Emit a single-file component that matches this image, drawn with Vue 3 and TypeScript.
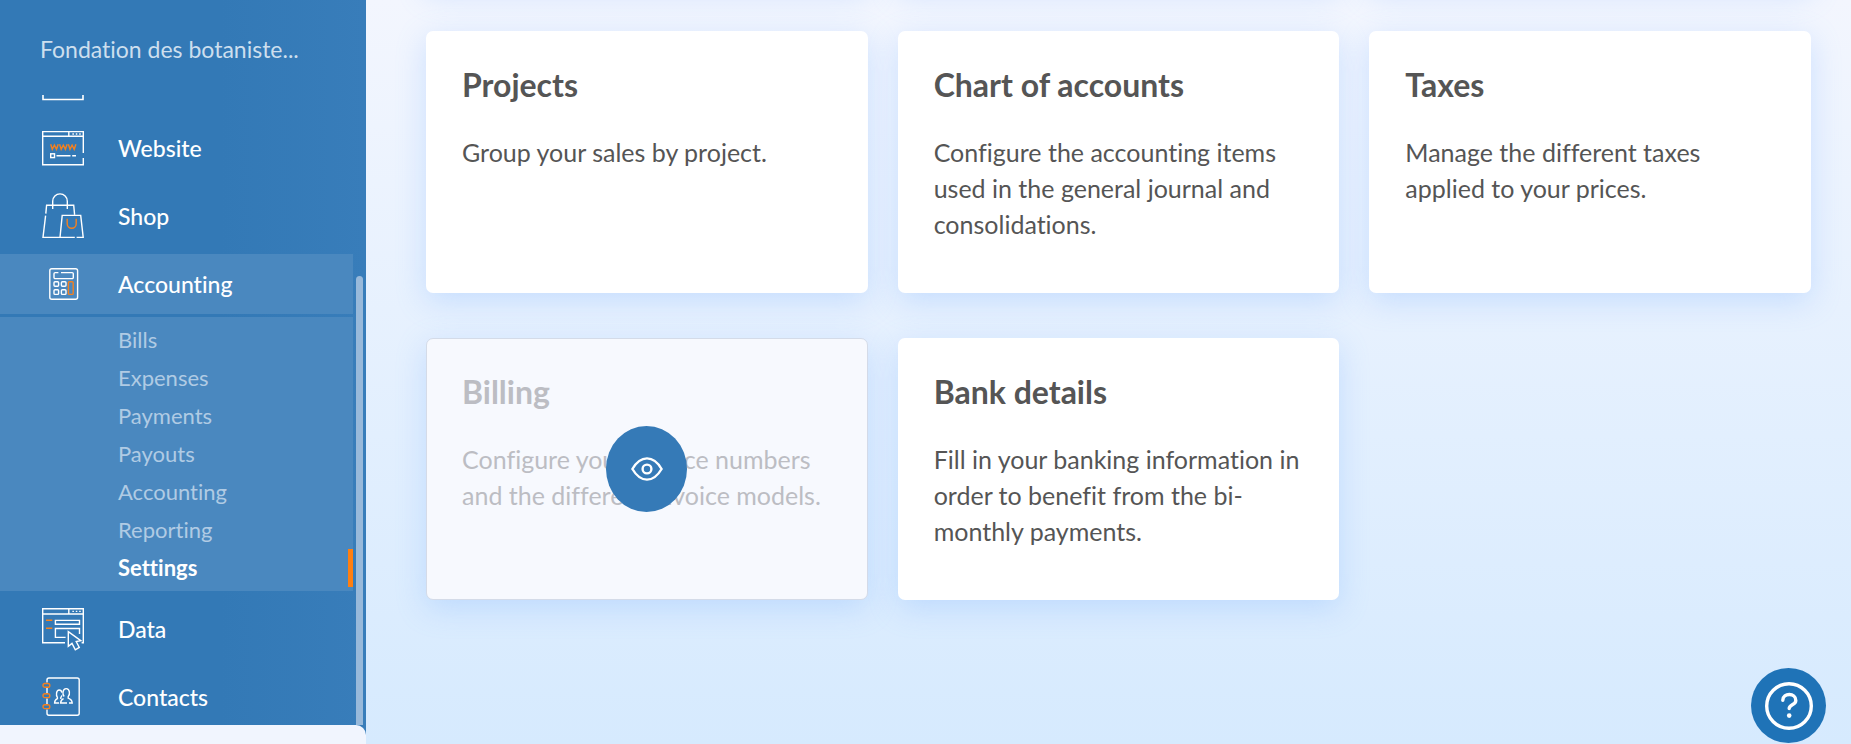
<script setup lang="ts">
interface Card {
  title: string
  text: string
  hovered?: boolean
}

const subItems: string[] = ['Bills', 'Expenses', 'Payments', 'Payouts', 'Accounting', 'Reporting', 'Settings']
const activeSub = 'Settings'

const cards: Card[] = [
  { title: 'Projects', text: 'Group your sales by project.' },
  { title: 'Chart of accounts', text: 'Configure the accounting items used in the general journal and consolidations.' },
  { title: 'Taxes', text: 'Manage the different taxes applied to your prices.' },
  { title: 'Billing', text: 'Configure your invoice numbers and the different invoice models.', hovered: true },
  { title: 'Bank details', text: 'Fill in your banking information in order to benefit from the bi-monthly payments.' },
]
</script>

<template>
  <div class="app">
    <aside class="sidebar">
      <header class="org">Fondation des botaniste...</header>

      <div class="scroller">
        <nav class="nav">
          <a class="item" href="#" aria-label="Events">
            <svg class="icon" viewBox="0 0 42 48">
              <path d="M1 6V43.5H41V6" stroke-width="1.6" />
            </svg>
          </a>

          <a class="item" href="#">
            <svg class="icon" viewBox="0 0 42 48">
              <path d="M41.3 29V7.6H.7V40.8H41.3V34M.7 12.3H41.3M26.8 7.6V12.3M14.5 31.7H28.5M30.2 31.7H34" />
              <path d="M30.4 10H31.9M33.8 10H35.3M37.2 10H38.7" />
              <rect x="8.7" y="29.8" width="3.8" height="3.8" />
              <path class="accent" d="M8.7 20.3L10.3 25.3L12.4 21L14.5 25.3L16.2 20.3M17.6 20.3L19.2 25.3L21.3 21L23.4 25.3L25.1 20.3M26.4 20.3L28 25.3L30.1 21L32.2 25.3L33.9 20.3" />
            </svg>
            <span>Website</span>
          </a>

          <a class="item" href="#">
            <svg class="icon" viewBox="0 0 42 48">
              <path d="M10.7 17V9.2a7.3 7.3 0 0 1 14.6 0V17M3.8 21.6L4.6 13.3H31.7L32.6 22.6M3.6 23.6L1 45.4H32.8M34.6 45.4H41.2L38.7 23.4H20.2L18 45.4" />
              <path class="accent" d="M25.2 26.8V31.8a4.5 4.5 0 0 0 9 0V26.8" />
            </svg>
            <span>Shop</span>
          </a>

          <div class="group">
            <a class="item current" href="#">
              <svg class="icon" viewBox="0 0 42 48">
                <rect x="7.8" y="8.8" width="27.8" height="30.4" rx="2" />
                <path d="M16.4 12.6H13.2a1.2 1.2 0 0 0-1.2 1.2V17.4a1.2 1.2 0 0 0 1.2 1.2H30.1a1.2 1.2 0 0 0 1.2-1.2V13.8a1.2 1.2 0 0 0-1.2-1.2H19" />
                <rect x="12" y="21.8" width="4.6" height="4.4" rx="1" />
                <rect x="19.4" y="21.8" width="4.6" height="4.4" rx="1" />
                <rect x="12" y="29.8" width="4.6" height="4.6" rx="1" />
                <rect x="19.4" y="29.8" width="4.6" height="4.6" rx="1" />
                <rect class="accent" x="26.4" y="21.8" width="4.8" height="12.6" rx="1" />
              </svg>
              <span>Accounting</span>
            </a>
            <div class="submenu">
              <a
                v-for="name in subItems"
                :key="name"
                href="#"
                class="sub"
                :class="{ active: name === activeSub }"
              >{{ name }}</a>
            </div>
          </div>

          <a class="item" href="#">
            <svg class="icon" viewBox="0 0 42 48">
              <path d="M23 37.7H.7V3.7H41.3V37.7H39.6M.7 9H41.3M26.8 3.7V9" />
              <path d="M30.4 6.4H31.9M33.8 6.4H35.3M37.2 6.4H38.7" />
              <path d="M13.4 15.4H37.5V19.3H13.4ZM23.6 32.4H13.4V23.5H37.5V29" />
              <path d="M26.3 26.6V41.4L30 38.4L33.3 44.8L37.3 42.4L34.2 36.5L38.8 35.6Z" />
              <path class="accent" d="M4 15.2H10.3M4 23.2H10.3" />
            </svg>
            <span>Data</span>
          </a>

          <a class="item" href="#">
            <svg class="icon" viewBox="0 0 42 48">
              <path d="M5 9.6V7a2 2 0 0 1 2-2H35.2a2 2 0 0 1 2 2V40.2a2 2 0 0 1-2 2H7a2 2 0 0 1-2-2V36.6M5 15V20M5 25.5V31" />
              <g class="accent">
                <rect x="1" y="10.5" width="6.8" height="3.8" rx="1.9" />
                <rect x="1" y="20.8" width="6.8" height="3.8" rx="1.9" />
                <rect x="1" y="31.8" width="6.8" height="3.8" rx="1.9" />
              </g>
              <path d="M21.6 25.6C20 26.2 18.8 27.3 18.6 30H25M27 30H30.2C30 27 28.4 26 26.2 25.2V23.6C28.2 21.6 28 15.6 24.2 15.6C20.4 15.6 20.2 21.6 22.2 23.6" />
              <path d="M17 30H12.6C12.6 27.6 13.6 26.4 15.4 25.6V24.4C13.8 22.4 14.2 17 17.2 17C18.8 17 19.6 18 19.9 19.6M19.8 22.4C19.6 23.4 19.2 24 18.8 24.6V26" />
            </svg>
            <span>Contacts</span>
          </a>
        </nav>
        <div class="track"><div class="thumb"></div></div>
      </div>

      <footer class="foot"></footer>
    </aside>

    <main class="main">
      <div class="grid">
        <div v-for="n in 3" :key="n" class="card passed"></div>
        <a v-for="card in cards" :key="card.title" href="#" class="card" :class="{ hovered: card.hovered }">
          <h2>{{ card.title }}</h2>
          <p>{{ card.text }}</p>
          <span v-if="card.hovered" class="eye">
            <svg viewBox="0 0 32 24">
              <path d="M1.4 12C5.5 5 10 1.4 16 1.4S26.5 5 30.6 12C26.5 19 22 22.6 16 22.6S5.5 19 1.4 12Z" />
              <circle cx="16" cy="12" r="4.4" />
            </svg>
          </span>
        </a>
      </div>
    </main>

    <button class="help" type="button" aria-label="Help">
      <svg viewBox="0 0 48 48">
        <circle cx="24" cy="24" r="22.3" />
        <path d="M17.8 18.2C18 10.6 30.8 10.6 30.8 18.4C30.8 23 24.2 22.6 24.2 26.6" />
        <circle class="dot" cx="24.2" cy="33.6" r="2.3" />
      </svg>
    </button>
  </div>
</template>

<style>
body {
  margin: 0;
}
</style>

<style scoped>
.app {
  display: flex;
  height: 100vh;
  overflow: hidden;
  font-family: Lato, "Open Sans", sans-serif;
  font-variant-ligatures: none;
  background: linear-gradient(#f3f6fe, #d6eafe);
}

a {
  color: inherit;
  text-decoration: none;
}

.sidebar {
  flex: 0 0 366px;
  display: flex;
  flex-direction: column;
  color: #fff;
  background: linear-gradient(90deg, #3379b6 60%, #387dba);
}

.org {
  padding: 34px 40px 31px;
  font-size: 23px;
  line-height: 30px;
  white-space: nowrap;
  color: #cddfee;
}

.scroller {
  flex: 1;
  min-height: 0;
  display: flex;
  overflow: hidden;
}

.nav {
  flex: 1;
  display: flex;
  flex-direction: column;
  gap: 8px;
  margin-top: -45px;
}

.item {
  flex: none;
  display: flex;
  align-items: center;
  gap: 34px;
  height: 60px;
  padding-left: 42px;
  font-size: 23px;
  font-weight: 500;
}

.current,
.submenu {
  background: #4a88bf;
}

.icon {
  width: 42px;
  height: 48px;
  fill: none;
  stroke: #fff;
  stroke-width: 1.4;
}

.accent {
  stroke: #f5811f;
}

.submenu {
  display: flex;
  flex-direction: column;
  margin-top: 3px;
  padding: 4px 0;
}

.sub {
  padding-left: 118px;
  font-size: 22px;
  line-height: 38px;
  color: #b0cbe4;
}

.active {
  border-right: 5px solid #ff7f11;
  font-weight: 700;
  color: #fff;
}

.track {
  display: flex;
  width: 7px;
  padding: 181px 3px 0;
}

.thumb {
  flex: 1;
  border-radius: 4px 4px 0 0;
  background: #98b9da;
}

.foot {
  height: 19px;
  border-top-right-radius: 10px;
  background: #f1f5fe;
}

.main {
  flex: 1;
  min-width: 0;
  overflow: hidden;
  padding: 0 40px 0 60px;
}

.grid {
  display: grid;
  grid-template-columns: repeat(3, 1fr);
  gap: 45px 30px;
  margin-top: -276px;
}

.card {
  position: relative;
  box-sizing: border-box;
  padding: 34px 36px 51px;
  border-radius: 7px;
  background: #fff;
  box-shadow: 0 8px 30px rgba(120, 175, 255, 0.3);
  color: #555;
}

.passed {
  height: 262px;
}

h2 {
  margin: 0 0 29px;
  font-size: 32px;
  line-height: 40px;
  font-weight: 700;
}

p {
  margin: 0;
  font-size: 25px;
  line-height: 36px;
}

.hovered {
  padding: 33px 35px 50px;
  border: 1px solid #d4dbe8;
  background: #f7f9fe;
  color: #bcbdc3;
}

.eye {
  position: absolute;
  inset: 0;
  display: flex;
  width: 81px;
  height: 86px;
  margin: auto;
  border-radius: 50%;
  background: #357ab7;
}

.eye svg {
  width: 32px;
  height: 24px;
  margin: auto;
  fill: none;
  stroke: #fff;
  stroke-width: 2.4;
}

.help {
  position: fixed;
  right: 25px;
  bottom: 1px;
  display: grid;
  place-items: center;
  width: 75px;
  height: 75px;
  padding: 0;
  border: 0;
  border-radius: 50%;
  background: #1f73b7;
}

.help svg {
  width: 48px;
  height: 48px;
  fill: none;
  stroke: #fff;
  stroke-width: 3.4;
  stroke-linecap: round;
}

.help .dot {
  fill: #fff;
  stroke: none;
}
</style>
